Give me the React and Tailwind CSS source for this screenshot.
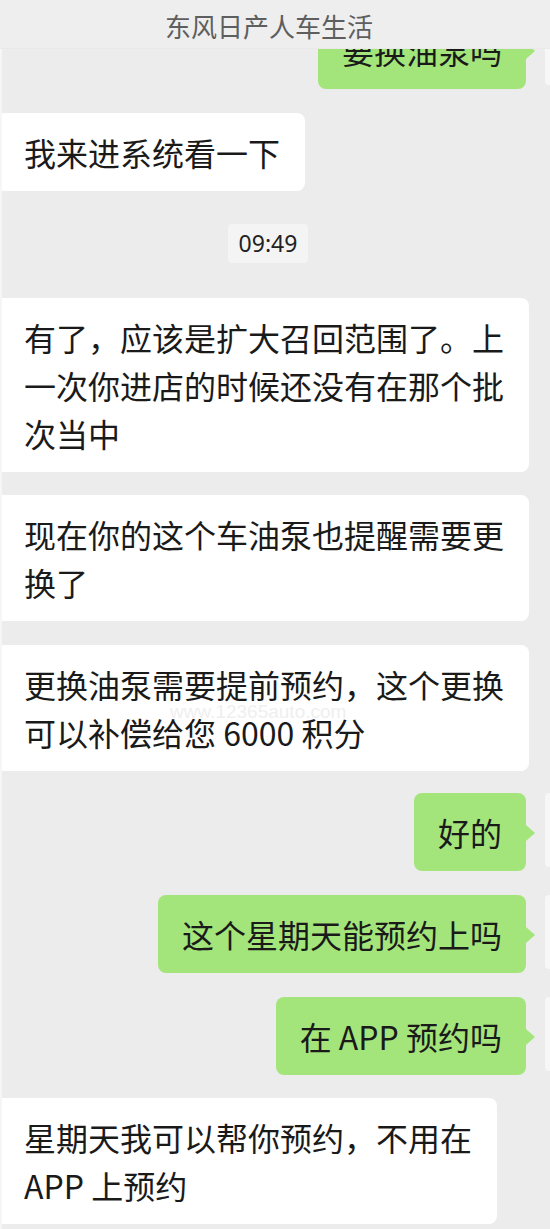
import React from "react";

const messages = [
  { id: 1, side: "right", lines: ["要换油泵吗"], mt: "mt-[-38px]" },
  { id: 2, side: "left", lines: ["我来进系统看一下"], mt: "mt-[24px]" },
  { id: 3, side: "time", text: "09:49", mt: "mt-[33px]" },
  {
    id: 4,
    side: "left",
    lines: ["有了，应该是扩大召回范围了。上", "一次你进店的时候还没有在那个批", "次当中"],
    mt: "mt-[35px]",
  },
  { id: 5, side: "left", lines: ["现在你的这个车油泵也提醒需要更", "换了"], mt: "mt-[23px]" },
  {
    id: 6,
    side: "left",
    lines: ["更换油泵需要提前预约，这个更换", "可以补偿给您 6000 积分"],
    mt: "mt-[24px]",
  },
  { id: 7, side: "right", lines: ["好的"], mt: "mt-[22px]" },
  { id: 8, side: "right", lines: ["这个星期天能预约上吗"], mt: "mt-[24px]" },
  { id: 9, side: "right", lines: ["在 APP 预约吗"], mt: "mt-[24px]" },
  {
    id: 10,
    side: "left",
    lines: ["星期天我可以帮你预约，不用在", "APP 上预约"],
    mt: "mt-[23px]",
  },
];

const BubbleText = ({ lines }) => (
  <div className="whitespace-nowrap text-[32px] leading-[48px] text-[#1a1a1a]">
    {lines.map((line, i) => (
      <div key={i}>{line}</div>
    ))}
  </div>
);

const LeftBubble = ({ lines, mt }) => (
  <div className={`flex ${mt}`}>
    <div className="rounded-r-lg bg-white py-[15px] pl-[24px] pr-[25px]">
      <BubbleText lines={lines} />
    </div>
  </div>
);

const RightBubble = ({ lines, mt }) => (
  <div className={`flex items-start justify-end ${mt}`}>
    <div className="relative rounded-lg bg-[#a3e57a] px-[24px] py-[15px]">
      <BubbleText lines={lines} />
      <span className="absolute right-[-9px] top-[32px] h-0 w-0 border-y-[8px] border-l-[9px] border-y-transparent border-l-[#a3e57a]" />
    </div>
    <div className="ml-[19px] h-[74px] w-[5px] rounded-l-sm bg-[#f7f7f7]" />
  </div>
);

const TimeStamp = ({ text, mt }) => (
  <div className={`flex justify-center ${mt}`}>
    <div className="ml-[-14px] flex h-[39px] items-center rounded bg-[#f4f4f4] px-[11px] font-['Noto_Sans','Noto_Sans_CJK_SC',sans-serif] text-[23px] text-[#222]">
      {text}
    </div>
  </div>
);

export default function App() {
  return (
    <div className="relative h-[1229px] w-[550px] overflow-hidden bg-[#ececec] font-['Noto_Sans_CJK_SC',sans-serif]">
      <header className="relative z-10 flex h-[49px] items-center justify-center border-b border-[#e9e9e9] bg-[#eeeeee]">
        <div className="absolute left-0 right-0 top-0 h-[4px] overflow-hidden">
          <div className="mt-[-17px] text-center text-[20px] leading-[20px] tracking-[6px] text-[#444]">
            ·····
          </div>
        </div>
        <h1 className="ml-[-12px] mt-[2px] text-[26px] font-normal text-[#5e5e5e]">东风日产人车生活</h1>
      </header>

      <main className="flex flex-col overflow-hidden">
        {messages.map((m) => {
          if (m.side === "time") return <TimeStamp key={m.id} {...m} />;
          if (m.side === "right") return <RightBubble key={m.id} {...m} />;
          return <LeftBubble key={m.id} {...m} />;
        })}
      </main>

      <div className="pointer-events-none absolute left-[170px] top-[702px] text-[19px] leading-[20px] text-[#efefef] font-['Liberation_Sans',sans-serif]">
        www.12365auto.com
      </div>
      <div className="pointer-events-none absolute bottom-0 left-0 top-0 w-[2px] bg-[#f6f6f6]" />
    </div>
  );
}
